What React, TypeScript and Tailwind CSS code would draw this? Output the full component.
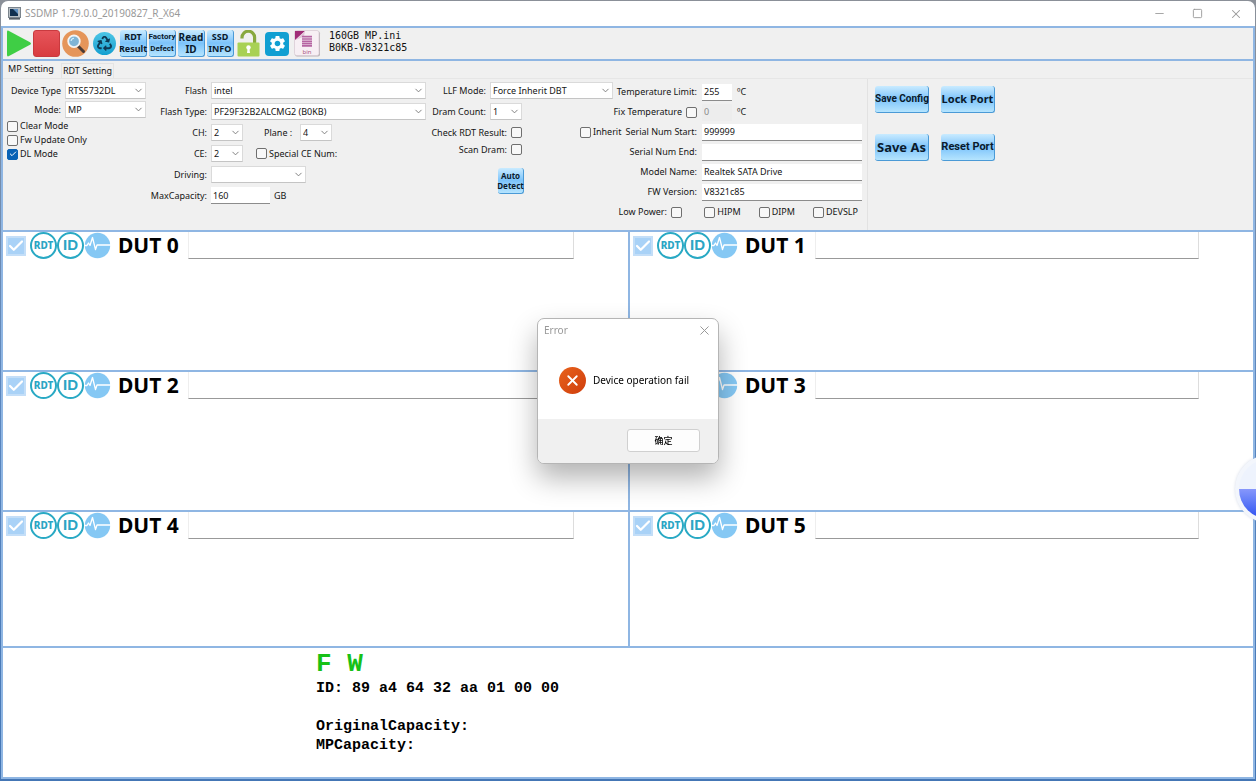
import React, { useId } from "react";
import { Check, ChevronDown, Minus, Square, X } from "lucide-react";
import { FaRecycle } from "react-icons/fa";
import { MdSettings } from "react-icons/md";

const glossy =
  "bg-gradient-to-b from-[#c9ebff] via-[#7cc3fa] to-[#b5e4fe] border-b border-r border-[#4a9ad6] rounded-[3px] text-[#0a1a2c] font-bold";

function Combo({ label, value, className }: { label: string; value: string; className: string }) {
  return (
    <div className={`grid h-[17px] items-center border border-[#dadada] border-b-[#c4c4c4] bg-white ${className}`}>
      <select
        aria-label={label}
        defaultValue={value}
        className="col-start-1 row-start-1 h-full w-full min-w-0 appearance-none bg-transparent pl-[2px] pr-3 leading-[15px] outline-none"
      >
        <option>{value}</option>
      </select>
      <ChevronDown
        size={11}
        strokeWidth={2}
        className="pointer-events-none col-start-1 row-start-1 mr-px justify-self-end text-[#777]"
      />
    </div>
  );
}

function Tick({ id, label, checked }: { id?: string; label?: string; checked?: boolean }) {
  return (
    <span className="grid size-[11px] shrink-0 place-items-center">
      <input
        id={id}
        aria-label={label}
        type="checkbox"
        defaultChecked={checked}
        className="peer col-start-1 row-start-1 size-[11px] appearance-none rounded-[2px] border border-[#6f6f6f] bg-[#f8f8f8] checked:border-[#0a62b5] checked:bg-[#0a62b5]"
      />
      <Check
        size={8}
        strokeWidth={3}
        className="pointer-events-none col-start-1 row-start-1 hidden text-white peer-checked:block"
      />
    </span>
  );
}

function TickRow({ text, checked, after }: { text: string; checked?: boolean; after?: boolean }) {
  const id = useId();
  return (
    <div className="flex items-center gap-[2px] whitespace-nowrap">
      {!after && <Tick id={id} checked={checked} />}
      <label htmlFor={id} className={after ? "mr-[2px]" : ""}>
        {text}
      </label>
      {after && <Tick id={id} checked={checked} />}
    </div>
  );
}

function Field({
  label,
  value,
  className,
  disabled,
}: {
  label: string;
  value: string;
  className: string;
  disabled?: boolean;
}) {
  return (
    <input
      aria-label={label}
      type="text"
      defaultValue={value}
      disabled={disabled}
      className={`h-[17px] border-b border-[#8c8c8c] bg-white pl-[2px] outline-none disabled:border-transparent disabled:bg-[#ededed] disabled:text-[#8a8a8a] ${className}`}
    />
  );
}

function GlossyTool({ lines, font }: { lines: [string, string]; font: string }) {
  return (
    <button
      className={`flex size-[27px] flex-col items-center justify-center whitespace-nowrap leading-[12px] ${glossy} ${font}`}
    >
      <span>{lines[0]}</span>
      <span>{lines[1]}</span>
    </button>
  );
}

function Toolbar() {
  return (
    <div className="flex h-[35px] items-center border-y-2 border-[#8fb6e3] bg-[#f0f0f0] pl-px">
      <div className="flex gap-[2px]">
        <button aria-label="Start" className="size-[27px]">
          <svg viewBox="0 0 27 27">
            <path d="M3 2 Q3 0 5 0.9 L26 12.2 Q28 13.5 26 14.8 L5 26.1 Q3 27 3 25Z" fill="#3fce45" />
          </svg>
        </button>
        <button
          aria-label="Stop"
          className="size-[27px] rounded-[3px] border border-[#c93a3f] bg-gradient-to-b from-[#e6545a] to-[#d93c40]"
        />
        <button aria-label="Scan" className="size-[27px]">
          <svg viewBox="0 0 27 27">
            <circle cx="13.5" cy="13.5" r="13.3" fill="#e5955a" />
            <path d="M16 16 L21.5 21.5" stroke="#4a3b36" strokeWidth="3" strokeLinecap="round" />
            <circle cx="12" cy="11.3" r="5.8" fill="#7fb4d6" stroke="#f4f4f4" strokeWidth="1.8" />
            <path d="M9 11 A3.2 3.2 0 0 1 12 8.2" stroke="#d9f0fb" strokeWidth="1.1" fill="none" />
          </svg>
        </button>
        <button aria-label="Refresh" className="grid size-[27px] place-items-center">
          <span className="grid size-[23px] place-items-center rounded-full bg-gradient-to-b from-[#4cc6e6] to-[#0f9fd0] text-[#0f3a55]">
            <FaRecycle size={15} />
          </span>
        </button>
        <GlossyTool lines={["RDT", "Result"]} font="text-[9px]" />
        <GlossyTool lines={["Factory", "Defect"]} font="font-['Roboto',sans-serif] text-[8px]" />
        <GlossyTool lines={["Read", "ID"]} font="text-[10px]" />
        <GlossyTool lines={["SSD", "INFO"]} font="text-[9px]" />
        <button aria-label="Unlock" className="size-[27px]">
          <svg viewBox="0 0 27 27">
            <path d="M6 8.5 V7.5 A6.3 6.3 0 0 1 18.6 7.5 V13" fill="none" stroke="#88a83e" strokeWidth="3.2" />
            <rect x="1.5" y="12.5" width="22" height="14" rx="1" fill="#a8d155" />
            <circle cx="12.5" cy="17.5" r="2.2" fill="#fff" />
            <path d="M11.6 18 H13.4 L14 23 H11Z" fill="#fff" />
          </svg>
        </button>
        <button aria-label="Settings" className="size-[27px]">
          <span className="grid size-[24px] place-items-center rounded-[4px] bg-[#119fd2] text-white">
            <MdSettings size={19} />
          </span>
        </button>
        <button aria-label="Load bin" className="size-[27px]">
          <svg viewBox="0 0 27 27">
            <rect x="1" y="1.5" width="25" height="25" rx="2" fill="#b9b3b7" />
            <rect x="0.5" y="0.5" width="24.5" height="25" rx="2" fill="#f7eff4" stroke="#d9ccd4" strokeWidth="0.8" />
            <path d="M1 1 H11 L1 10Z" fill="#a02d78" />
            <path d="M1.5 10 L11 1 L10 6.5Z" fill="#e2c4d8" />
            <path d="M8 6.7H18 M8 9H18 M8 11.3H18 M8 13.6H18 M8 15.9H18" stroke="#b565a2" strokeWidth="1.7" />
            <text x="13" y="24" textAnchor="middle" fontSize="6" fill="#a9557c" fontFamily="Noto Sans">
              bin
            </text>
          </svg>
        </button>
      </div>
      <div className="ml-2 whitespace-pre pb-1 font-['DejaVu_Sans_Mono',monospace] text-[10px] leading-[12px] text-[#111]">
        <p>160GB MP.ini</p>
        <p>B0KB-V8321c85</p>
      </div>
    </div>
  );
}

function Settings() {
  return (
    <section className="flex h-[169px] flex-col bg-[#f0f0f0]">
      <div className="flex h-[18px] items-end border-b border-[#e6e6e6]">
        <button className="pb-[2px] pl-[5px] pr-[7px] leading-[14px]">MP Setting</button>
        <button className="border-x border-t border-[#e4e4e4] px-px leading-[14px]">RDT Setting</button>
      </div>
      <div className="flex flex-1 items-start">
        <div className="flex w-[143px] flex-col gap-[2px] pt-[3px]">
          <div className="flex items-center justify-end gap-1">
            <span>Device Type</span>
            <Combo label="Device Type" value="RTS5732DL" className="w-[81px]" />
          </div>
          <div className="flex items-center justify-end gap-1">
            <span>Mode:</span>
            <Combo label="Mode" value="MP" className="w-[81px]" />
          </div>
          <div className="flex flex-col gap-[2px] pl-1 leading-[12px]">
            <TickRow text="Clear Mode" />
            <TickRow text="Fw Update Only" />
            <TickRow text="DL Mode" checked />
          </div>
        </div>

        <div className="grid w-[280px] grid-cols-[61px_1fr] gap-x-1 gap-y-1 pt-[3px] leading-[17px]">
          <span className="text-right">Flash</span>
          <Combo label="Flash" value="intel" className="w-full" />
          <span className="text-right">Flash Type:</span>
          <Combo label="Flash Type" value="PF29F32B2ALCMG2 (B0KB)" className="w-full" />
          <span className="text-right">CH:</span>
          <div className="flex items-center">
            <Combo label="CH" value="2" className="w-[32px]" />
            <span className="ml-[21px] w-[36px] whitespace-nowrap">Plane :</span>
            <Combo label="Plane" value="4" className="w-[32px]" />
          </div>
          <span className="text-right">CE:</span>
          <div className="flex items-center gap-[13px]">
            <Combo label="CE" value="2" className="w-[32px]" />
            <TickRow text="Special CE Num:" />
          </div>
          <span className="text-right">Driving:</span>
          <Combo label="Driving" value="" className="w-[95px]" />
          <span className="text-right">MaxCapacity:</span>
          <div className="flex items-center gap-1">
            <Field label="MaxCapacity" value="160" className="w-[59px]" />
            <span>GB</span>
          </div>
        </div>

        <div className="flex w-[187px] flex-col gap-1 pt-[3px] leading-[17px]">
          <div className="flex items-center gap-1">
            <span className="w-[60px] text-right">LLF Mode:</span>
            <Combo label="LLF Mode" value="Force Inherit DBT" className="flex-1" />
          </div>
          <div className="flex items-center gap-1">
            <span className="w-[60px] text-right">Dram Count:</span>
            <Combo label="Dram Count" value="1" className="w-[32px]" />
          </div>
          <div className="flex w-[96px] flex-col items-end">
            <TickRow text="Check RDT Result:" after />
            <TickRow text="Scan Dram:" after />
          </div>
          <button
            className={`ml-[72px] mt-[6px] flex size-[26px] flex-col items-center justify-center text-[8px] leading-[10px] ${glossy}`}
          >
            <span>Auto</span>
            <span>Detect</span>
          </button>
        </div>

        <div className="flex h-full w-[255px] flex-col border-r border-[#e2e2e2] pr-[5px] pt-[3px]">
          <div className="flex h-[20px] items-center gap-[5px]">
            <span className="w-[84px] text-right">Temperature Limit:</span>
            <Field label="Temperature Limit" value="255" className="w-[30px]" />
            <span>ºC</span>
          </div>
          <div className="flex h-[20px] items-center gap-[5px]">
            <div className="flex w-[84px] justify-end">
              <TickRow text="Fix Temperature" after />
            </div>
            <Field label="Fixed temperature value" value="0" className="w-[30px]" disabled />
            <span>ºC</span>
          </div>
          <div className="flex h-[20px] items-center gap-[5px]">
            <div className="flex w-[84px] items-center justify-end gap-1 whitespace-nowrap">
              <TickRow text="Inherit" />
              <span>Serial Num Start:</span>
            </div>
            <Field label="Serial Num Start" value="999999" className="w-0 flex-1" />
          </div>
          <div className="flex h-[20px] items-center gap-[5px]">
            <span className="w-[84px] text-right">Serial Num End:</span>
            <Field label="Serial Num End" value="" className="w-0 flex-1" />
          </div>
          <div className="flex h-[20px] items-center gap-[5px]">
            <span className="w-[84px] text-right">Model Name:</span>
            <Field label="Model Name" value="Realtek SATA Drive" className="w-0 flex-1" />
          </div>
          <div className="flex h-[20px] items-center gap-[5px]">
            <span className="w-[84px] text-right">FW Version:</span>
            <Field label="FW Version" value="V8321c85" className="w-0 flex-1" />
          </div>
          <div className="flex h-[20px] items-center">
            <div className="flex w-[69px] justify-end">
              <TickRow text="Low Power:" after />
            </div>
            <div className="ml-auto flex gap-[18px] pr-1">
              <TickRow text="HIPM" />
              <TickRow text="DIPM" />
              <TickRow text="DEVSLP" />
            </div>
          </div>
        </div>

        <div className="ml-[7px] mt-[7px] grid grid-cols-2 gap-x-3 gap-y-[21px]">
          {[
            ["Save Config", "font-['Roboto',sans-serif] text-[10px]"],
            ["Lock Port", "text-[11px]"],
            ["Save As", "text-[13px]"],
            ["Reset Port", "font-['Roboto',sans-serif] text-[11px]"],
          ].map(([name, font]) => (
            <button key={name} className={`h-[27px] w-[54px] whitespace-nowrap text-center leading-[24px] ${glossy} ${font}`}>
              {name}
            </button>
          ))}
        </div>
      </div>
    </section>
  );
}

function Badge({ text, size }: { text: string; size: string }) {
  return (
    <button
      className={`flex size-[27px] items-center justify-center rounded-full border-2 border-[#29a9c4] text-[#2ba5c4] ${size}`}
    >
      {text}
    </button>
  );
}

function Dut({ index }: { index: number }) {
  return (
    <article className="flex items-start border-b-2 border-r-2 border-[#8fb6e3] pl-[3px] even:border-r-0">
      <label className="mt-[4px] grid size-[20px] place-items-center bg-[#a9d2f7]">
        <input
          type="checkbox"
          defaultChecked
          aria-label={`Enable DUT ${index}`}
          className="col-start-1 row-start-1 size-[20px] appearance-none border-2 border-[#c3def8]"
        />
        <Check size={18} strokeWidth={3} className="col-start-1 row-start-1 text-white" />
      </label>
      <div className="ml-[4px] flex">
        <Badge text="RDT" size="text-[10px] font-extrabold" />
        <Badge text="ID" size="font-['Liberation_Sans',sans-serif] text-[15px] font-bold" />
        <svg viewBox="0 0 27 27" className="size-[27px]">
          <circle cx="13.5" cy="13.5" r="12.7" fill="#85c8f4" />
          <path
            d="M0 13.5 H3 L4.5 11 L6 13.5 L8.5 5.5 L11.5 17.5 L13 13 H27"
            fill="none"
            stroke="#fff"
            strokeWidth="1.3"
            strokeLinejoin="round"
          />
        </svg>
      </div>
      <h2 className="ml-[7px] w-[70px] whitespace-nowrap text-[21px] font-bold leading-[26px] text-black">
        DUT {index}
      </h2>
      <input
        type="text"
        aria-label={`DUT ${index} status`}
        className="mr-[54px] h-[27px] min-w-0 flex-1 border-b border-l border-r border-b-[#999] border-l-[#eee] border-r-[#ddd] outline-none"
      />
    </article>
  );
}

function ErrorDialog() {
  return (
    <div className="fixed inset-0 flex items-center justify-center">
      <div
        role="alertdialog"
        aria-label="Error"
        className="w-[182px] overflow-hidden rounded-[7px] border border-[#b5b5b5] bg-white shadow-[0_14px_28px_rgba(0,0,0,0.3)]"
      >
        <header className="flex h-[24px] items-center justify-between px-[6px] text-[10px] text-[#999]">
          <span>Error</span>
          <button aria-label="Close">
            <X size={15} strokeWidth={1.6} />
          </button>
        </header>
        <div className="flex h-[76px] items-center gap-[7px] pl-[21px] text-[10px] text-black">
          <span className="grid size-[27px] place-items-center rounded-full bg-gradient-to-br from-[#e8621c] to-[#cf3d0c] text-white">
            <X size={17} strokeWidth={2.6} />
          </span>
          <p>Device operation fail</p>
        </div>
        <footer className="flex h-[44px] items-center justify-end bg-[#f0f0f0] pr-[18px]">
          <button className="h-[23px] w-[73px] rounded-[3px] border border-[#d0d0d0] bg-[#fdfdfd] font-['Noto_Sans_CJK_SC',sans-serif] text-[9px] font-medium leading-[20px] text-black">
            确定
          </button>
        </footer>
      </div>
    </div>
  );
}

export default function App() {
  return (
    <div className="flex min-h-screen flex-col overflow-hidden bg-gradient-to-b from-[#8b9098] via-[#5c87bf] to-[#4476b5] px-px pb-[2px] pt-px font-['Noto_Sans','Open_Sans',sans-serif] text-[9px] text-[#151515]">
      <main className="flex flex-1 flex-col overflow-hidden rounded-t-[7px] bg-white">
        <header className="flex h-[25px] items-center pl-[7px] text-[#999]">
          <svg viewBox="0 0 13 13" className="size-[13px]">
            <rect x="0.5" y="0.5" width="12" height="10" fill="#b9c0c6" stroke="#7b848c" />
            <rect x="2" y="2" width="8" height="7" fill="#12304f" />
            <path d="M5 2 L10 2 L10 7Z" fill="#5f8fc0" />
            <rect x="1" y="11" width="11" height="1.6" fill="#596068" />
          </svg>
          <h1 className="ml-[4px] flex-1 text-[10px]">SSDMP 1.79.0.0_20190827_R_X64</h1>
          <div className="flex items-center gap-[26px] pr-[12px]">
            <button aria-label="Minimize">
              <Minus size={13} strokeWidth={1.6} />
            </button>
            <button aria-label="Maximize">
              <Square size={11} strokeWidth={2} />
            </button>
            <button aria-label="Close">
              <X size={14} strokeWidth={1.8} />
            </button>
          </div>
        </header>
        <div className="flex flex-1 flex-col border-x-2 border-b-2 border-[#8fb6e3]">
          <Toolbar />
          <Settings />
          <div className="grid flex-1 grid-cols-[628fr_624fr] grid-rows-[140fr_140fr_136fr] border-t-2 border-[#8fb6e3]">
            {[0, 1, 2, 3, 4, 5].map((n) => (
              <Dut key={n} index={n} />
            ))}
          </div>
          <section className="whitespace-pre pb-[22px] pl-[313px] pt-px font-['Liberation_Mono',monospace] text-[15px] font-bold leading-[19px] text-black">
            <p className="text-[26px] leading-[30px] text-[#17c117]">F W</p>
            <p>ID: 89 a4 64 32 aa 01 00 00</p>
            <p> </p>
            <p>OriginalCapacity:</p>
            <p>MPCapacity:</p>
          </section>
        </div>
      </main>

      <button
        aria-label="Assistant"
        className="fixed -right-[47px] bottom-[258px] size-[68px] rounded-full bg-[#f3f6fc] p-1 shadow-[0_0_3px_rgba(120,140,180,0.3)]"
      >
        <span className="block size-full rounded-full bg-gradient-to-b from-[#eef3fd] from-50% via-[#8797fb] via-50% to-[#2e4df0]" />
      </button>

      <ErrorDialog />
    </div>
  );
}
